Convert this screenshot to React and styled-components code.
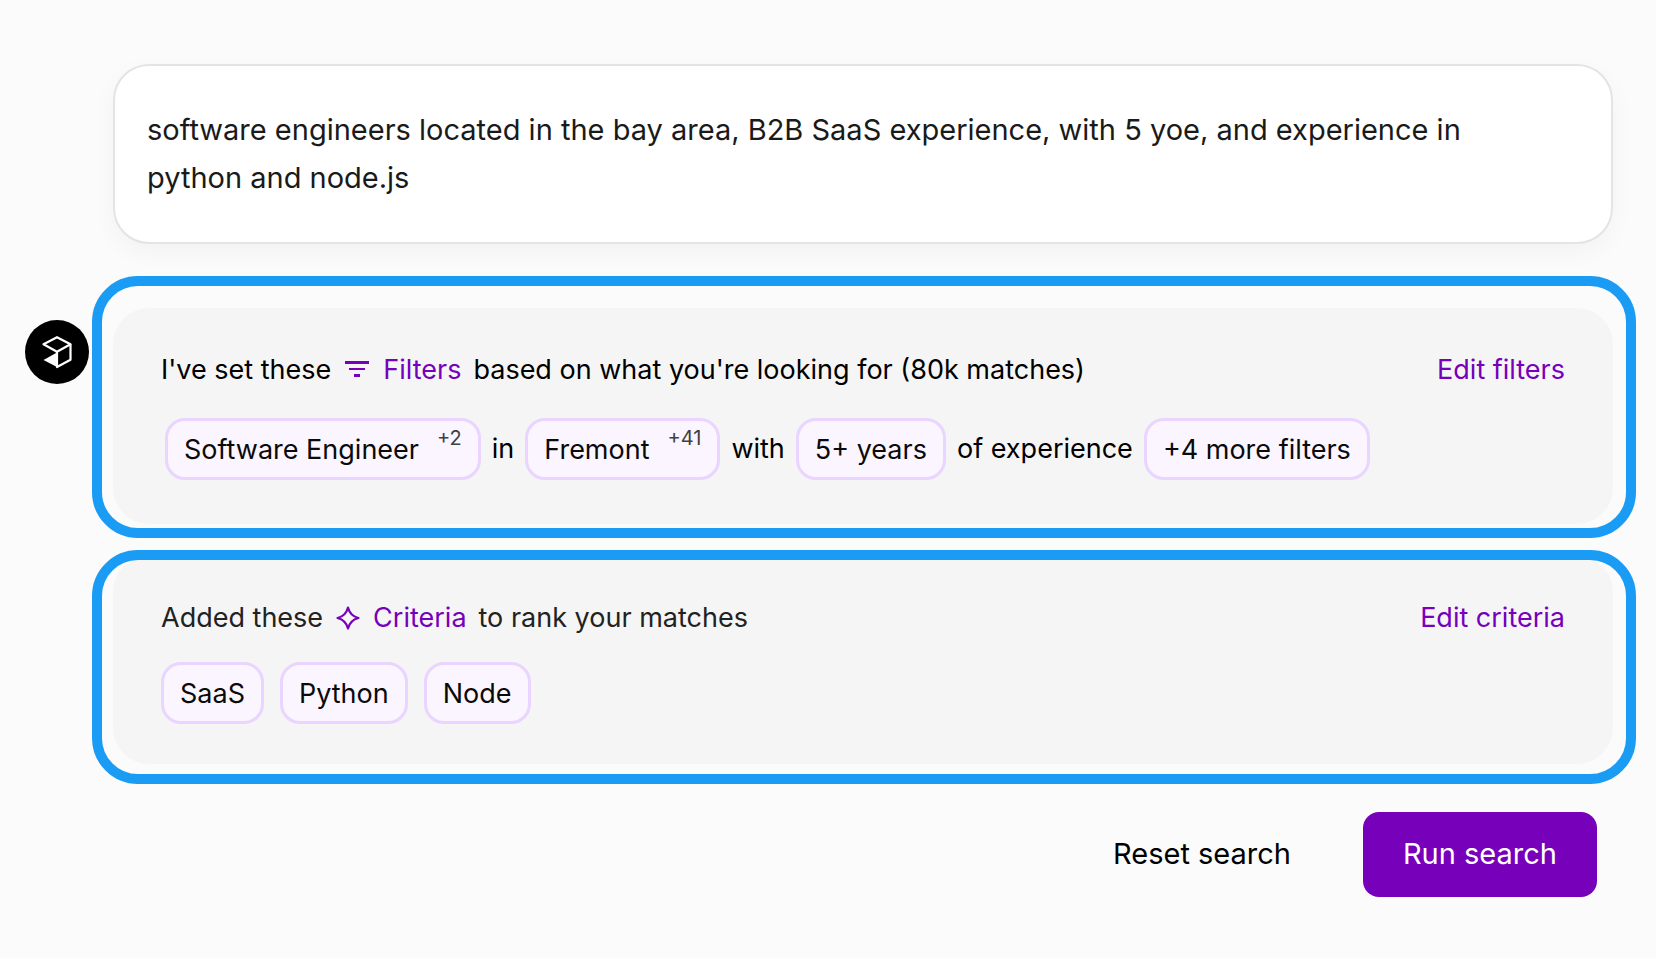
import React, { useState } from 'react'
import styled, { createGlobalStyle } from 'styled-components'

const GlobalStyle = createGlobalStyle`
    * {
        box-sizing: border-box;
    }
    body {
        margin: 0;
        background-color: #fbfbfb;
        font-family: Inter, "Liberation Sans", sans-serif;
    }
    button, textarea {
        font-family: inherit;
    }
`

const Page = styled.main`
    min-height: 100vh;
    padding: 64px 43px 60px 25px;
    border-right: 6px solid #fff;
    background-color: #fbfbfb;
    color: #000;
    font-size: 27px;
    line-height: 40px;
`

const Query = styled.textarea`
    display: block;
    width: calc(100% - 88px);
    height: 180px;
    margin: 0 0 64px 88px;
    padding: 40px 90px 40px 32px;
    border: 2px solid #e4e4e4;
    border-radius: 36px;
    outline: none;
    resize: none;
    background-color: #fff;
    box-shadow: 0 8px 24px rgba(0, 0, 0, 0.04);
    color: #1a1a1a;
    font-size: 29px;
    line-height: 48px;
`

const Reply = styled.section`
    display: flex;
    align-items: flex-start;
    gap: 24px;
`

const Avatar = styled.div`
    flex: none;
    display: flex;
    align-items: center;
    justify-content: center;
    width: 64px;
    height: 64px;
    margin-top: 12px;
    border-radius: 50%;
    background-color: #000;
`

const Panels = styled.div`
    flex: 1;
    display: flex;
    flex-direction: column;
    gap: 32px;
`

const Panel = styled.article`
    position: relative;
    padding: ${props => props.$padding};
    border-radius: 36px;
    background-color: #f5f5f5;
    color: ${props => props.$color};

    /* highlight ring drawn over the panel */
    &::after {
        content: "";
        position: absolute;
        inset: ${props => props.$ring};
        border: 10px solid #1a9cf5;
        border-radius: 46px;
        pointer-events: none;
    }
`

const PanelHead = styled.header`
    display: flex;
    align-items: center;
    justify-content: space-between;
    margin-bottom: ${props => props.$gap};
`

const Sentence = styled.p`
    display: flex;
    align-items: center;
    gap: 12px;
    margin: 0;
`

const Topic = styled.strong`
    display: flex;
    align-items: center;
    gap: 12px;
    color: #7700bb;
    font-weight: 400;
`

const EditButton = styled.button`
    padding: 0;
    border: 0;
    background: none;
    color: #7700bb;
    font-size: 27px;
    line-height: 40px;
    cursor: pointer;
`

const Row = styled.div`
    display: flex;
    flex-wrap: wrap;
    align-items: center;
    gap: ${props => props.$gap};
    padding-left: ${props => props.$indent || 0};
    color: #000;
`

const Chip = styled.button`
    display: flex;
    gap: 18px;
    height: 62px;
    padding: 9px 16px 7px;
    border: 3px solid #e9d5ff;
    border-radius: 20px;
    background-color: #faf5ff;
    color: #0a0a0a;
    font-size: 27px;
    line-height: 40px;
    cursor: pointer;
`

const Count = styled.span`
    color: #404040;
    font-size: 20px;
    line-height: 16px;
`

const Actions = styled.footer`
    display: flex;
    justify-content: flex-end;
    gap: 32px;
    margin-top: 48px;
    padding-right: 16px;
`

const ActionButton = styled.button`
    height: 85px;
    padding: 0 40px 2px;
    border: 0;
    border-radius: 16px;
    background-color: ${props => props.$primary ? '#7700bb' : 'transparent'};
    color: ${props => props.$primary ? '#fff' : '#000'};
    font-size: 29px;
    cursor: pointer;
`

const Cube = () => (
  <svg width="32" height="34" viewBox="0 0 32 34" fill="none" stroke="#fff" strokeWidth="2.2" strokeLinejoin="round">
    <path d="M16 2.2 29.5 9.3 16 16.7 2.5 9.3Z" />
    <path d="M29.5 9.3V24.7L16 32V16.7" />
    <path d="M16 17.5V32L2.5 25Z" fill="#fff" stroke="none" />
  </svg>
)

const FilterIcon = () => (
  <svg width="28" height="24" viewBox="0 0 28 24" fill="#7700bb">
    <path d="M2 3h24v3H2zM6 10h16v2H6zM11 16h6v3h-6z" />
  </svg>
)

const SparkIcon = () => (
  <svg width="26" height="24" viewBox="0 0 26 24" fill="none" stroke="#7700bb" strokeWidth="2.2" strokeLinejoin="round">
    <path d="M13 1.5C14.5 7.5 17.5 10.5 23.5 12 17.5 13.5 14.5 16.5 13 22.5 11.5 16.5 8.5 13.5 2.5 12 8.5 10.5 11.5 7.5 13 1.5Z" />
  </svg>
)

const criteria = ['SaaS', 'Python', 'Node']

const App = () => {
  const [query, setQuery] = useState(
    'software engineers located in the bay area, B2B SaaS experience, with 5 yoe, and experience in python and node.js'
  )

  return (
    <>
      <GlobalStyle />
      <Page>
        <Query
          aria-label="Search query"
          spellCheck={false}
          value={query}
          onChange={(e) => setQuery(e.target.value)}
        />
        <Reply>
          <Avatar>
            <Cube />
          </Avatar>
          <Panels>
            <Panel $padding="42px 48px 44px" $ring="-32px -23px -14px -21px" $color="#000">
              <PanelHead $gap="28px">
                <Sentence>
                  I've set these
                  <Topic><FilterIcon />Filters</Topic>
                  based on what you're looking for (80k matches)
                </Sentence>
                <EditButton>Edit filters</EditButton>
              </PanelHead>
              <Row $gap="11px" $indent="4px">
                <Chip>Software Engineer <Count>+2</Count></Chip>
                in
                <Chip>Fremont <Count>+41</Count></Chip>
                with
                <Chip>5+ years</Chip>
                of experience
                <Chip>+4 more filters</Chip>
              </Row>
            </Panel>
            <Panel $padding="42px 48px 40px" $ring="-6px -23px -20px -21px" $color="#222">
              <PanelHead $gap="24px">
                <Sentence>
                  Added these
                  <Topic><SparkIcon />Criteria</Topic>
                  to rank your matches
                </Sentence>
                <EditButton>Edit criteria</EditButton>
              </PanelHead>
              <Row $gap="16px">
                {criteria.map((name) => (
                  <Chip key={name}>{name}</Chip>
                ))}
              </Row>
            </Panel>
          </Panels>
        </Reply>
        <Actions>
          <ActionButton>Reset search</ActionButton>
          <ActionButton $primary>Run search</ActionButton>
        </Actions>
      </Page>
    </>
  )
}

export default App
